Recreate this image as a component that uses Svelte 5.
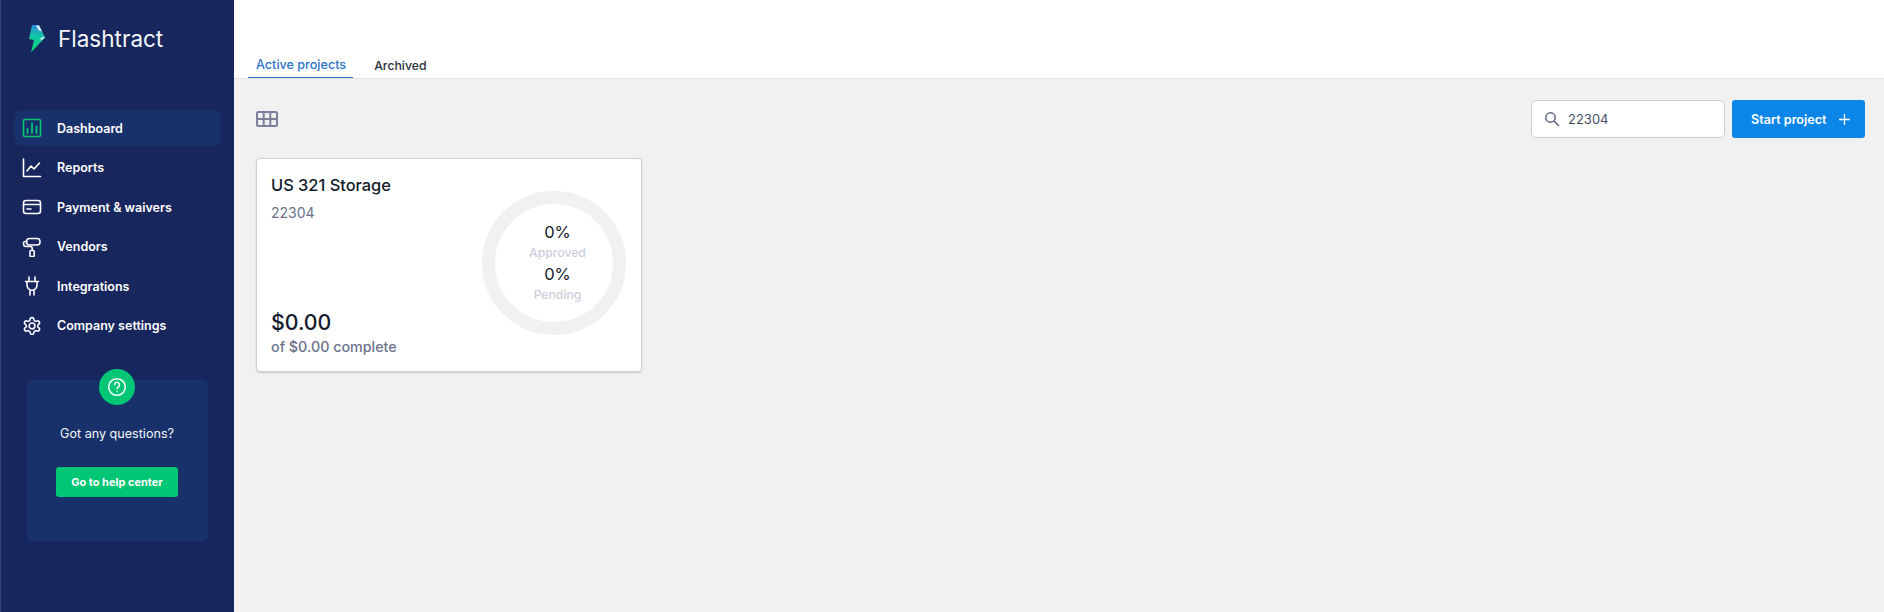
<script>
    const navItems = [
        { label: "Dashboard", icon: "dashboard", active: true },
        { label: "Reports", icon: "reports" },
        { label: "Payment & waivers", icon: "payment" },
        { label: "Vendors", icon: "vendors" },
        { label: "Integrations", icon: "integrations" },
        { label: "Company settings", icon: "settings" },
    ];
</script>

<div class="page">
    <aside class="sidebar">
        <div class="logo">
            <svg width="18" height="30" viewBox="0 0 18 30">
                <defs>
                    <linearGradient id="bolt" x1="0" y1="0" x2="0" y2="1">
                        <stop offset="0" stop-color="#2b86dc" />
                        <stop offset="0.4" stop-color="#14c6a6" />
                        <stop offset="1" stop-color="#00d676" />
                    </linearGradient>
                </defs>
                <path d="M4 2h7l6 12.500-14 15 3-12.500-5-1z" fill="url(#bolt)" />
                <path d="M8 2.500h3l3 6-3-1z" fill="#e6f1fb" />
                <path d="M12.500 15l4-1.500.5 1-4 3z" fill="#cfe6fa" />
            </svg>
            <span class="logo-text">Flashtract</span>
        </div>

        <nav class="nav">
            {#each navItems as item}
                <a class="nav-item" class:active={item.active} href="#top">
                    <svg class="nav-icon" width="20" height="20" viewBox="0 0 20 20" fill="none" stroke="currentColor" stroke-width="1.6" stroke-linecap="round" stroke-linejoin="round">
                        {#if item.icon === "dashboard"}
                            <rect x="1.5" y="1.5" width="17" height="17" rx="1.5" />
                            <path d="M5.500 15v-4M10 15V5.500M14.500 15V8.500" stroke-width="1.800" />
                        {:else if item.icon === "reports"}
                            <path d="M1.500 1v17.500h17" />
                            <path d="M5 13l4-5 3 3 5.500-6" />
                        {:else if item.icon === "payment"}
                            <rect x="1.500" y="3.500" width="17" height="13" rx="2.500" />
                            <path d="M1.500 7.500h17M5 12h4" />
                        {:else if item.icon === "vendors"}
                            <rect x="4.500" y="1.500" width="13.500" height="6.500" rx="3" />
                            <path d="M4.500 4.500H3.200a1.700 1.700 0 0 0-1.700 1.700v.6a2.700 2.700 0 0 0 2.700 2.700h4.300a1.700 1.700 0 0 1 1.700 1.700v2" />
                            <rect x="8" y="13.500" width="4.200" height="6" rx="1" />
                        {:else if item.icon === "integrations"}
                            <path d="M7 1v4M13 1v4M3.500 5.500h13M5 5.500v3.700a5 5 0 0 0 10 0V5.500M8 14.500V19M12 14.500V19" />
                        {:else}
                            <g transform="scale(0.8333)" stroke-width="1.900">
                                <path d="M12.220 2h-.44a2 2 0 0 0-2 2v.18a2 2 0 0 1-1 1.730l-.43.250a2 2 0 0 1-2 0l-.15-.08a2 2 0 0 0-2.730.730l-.22.380a2 2 0 0 0 .730 2.730l.15.100a2 2 0 0 1 1 1.720v.510a2 2 0 0 1-1 1.740l-.15.090a2 2 0 0 0-.730 2.730l.22.380a2 2 0 0 0 2.730.730l.15-.08a2 2 0 0 1 2 0l.43.250a2 2 0 0 1 1 1.730V20a2 2 0 0 0 2 2h.44a2 2 0 0 0 2-2v-.18a2 2 0 0 1 1-1.730l.43-.25a2 2 0 0 1 2 0l.15.08a2 2 0 0 0 2.730-.73l.22-.39a2 2 0 0 0-.73-2.730l-.15-.08a2 2 0 0 1-1-1.740v-.5a2 2 0 0 1 1-1.740l.15-.09a2 2 0 0 0 .73-2.730l-.22-.38a2 2 0 0 0-2.730-.73l-.15.08a2 2 0 0 1-2 0l-.43-.25a2 2 0 0 1-1-1.730V4a2 2 0 0 0-2-2z" />
                                <circle cx="12" cy="12" r="3.500" />
                            </g>
                        {/if}
                    </svg>
                    <span>{item.label}</span>
                </a>
            {/each}
        </nav>

        <div class="help">
            <div class="help-badge">
                <svg width="20" height="20" viewBox="0 0 20 20" fill="none" stroke="#fff" stroke-width="1.500" stroke-linecap="round">
                    <circle cx="10" cy="10" r="8.300" />
                    <path d="M7.500 7.800a2.500 2.500 0 1 1 3.800 2.100c-.9.600-1.300 1-1.300 1.900" />
                    <path d="M10 14.400v.1" />
                </svg>
            </div>
            <p>Got any questions?</p>
            <button class="help-button">Go to help center</button>
        </div>
    </aside>

    <main class="main">
        <header class="tabs">
            <a class="tab selected" href="#top">Active projects</a>
            <a class="tab" href="#top">Archived</a>
        </header>

        <div class="content">
            <div class="toolbar">
                <svg class="grid-icon" width="22" height="16" viewBox="0 0 22 16" fill="none" stroke="#79819c" stroke-width="2">
                    <rect x="1" y="1" width="20" height="14" rx="1.500" />
                    <path d="M1 8h20M7.700 1v14M14.300 1v14" />
                </svg>
                <div class="actions">
                    <div class="search">
                        <svg width="16" height="16" viewBox="0 0 16 16" fill="none" stroke="#5f6680" stroke-width="1.500" stroke-linecap="round">
                            <circle cx="6.500" cy="6.500" r="4.700" />
                            <path d="M10 10l4.500 4.500" />
                        </svg>
                        <span>22304</span>
                    </div>
                    <button class="start">
                        <span>Start project</span>
                        <svg width="13" height="13" viewBox="0 0 13 13" stroke="#fff" stroke-width="1.300">
                            <path d="M6.500 1v11M1 6.500h11" />
                        </svg>
                    </button>
                </div>
            </div>

            <section class="card">
                <div class="card-left">
                    <div>
                        <h2>US 321 Storage</h2>
                        <div class="code">22304</div>
                    </div>
                    <div>
                        <div class="amount">$0.00</div>
                        <div class="complete">of $0.00 complete</div>
                    </div>
                </div>
                <div class="ring">
                    <div class="pct">0%</div>
                    <div class="ring-label">Approved</div>
                    <div class="pct">0%</div>
                    <div class="ring-label">Pending</div>
                </div>
            </section>
        </div>
    </main>
</div>

<style>
    :global(body) {
        margin: 0;
        background: #f1f1f2;
    }
    .page {
        display: flex;
        height: 612px;
        overflow: hidden;
        font-family: Inter, "Liberation Sans", sans-serif;
    }
    .sidebar {
        box-sizing: border-box;
        width: 234px;
        flex-shrink: 0;
        padding: 23px 14px 0 13px;
        background: #17265c;
        border-left: 1px solid #3b4675;
    }
    .logo {
        display: flex;
        align-items: center;
        gap: 12px;
        height: 30px;
        padding-left: 14px;
    }
    .logo-text {
        color: #f4f6fa;
        font-size: 22.5px;
        font-weight: 400;
    }
    .nav {
        display: flex;
        flex-direction: column;
        margin-top: 57px;
    }
    .nav-item {
        display: flex;
        align-items: center;
        gap: 15px;
        height: 36px;
        margin-bottom: 3.5px;
        padding-left: 8px;
        border-radius: 6px;
        color: #fff;
        font-size: 12.5px;
        font-weight: 600;
        text-decoration: none;
    }
    .nav-item.active {
        background: #18316a;
    }
    .nav-item.active .nav-icon {
        color: #06c574;
    }
    .help {
        position: relative;
        box-sizing: border-box;
        height: 162px;
        margin: 33px 12px 0;
        padding-top: 46px;
        border-radius: 6px;
        background: #18316a;
        color: #f4f6fa;
        text-align: center;
    }
    .help p {
        margin: 0;
        font-size: 12.6px;
    }
    .help-badge {
        position: absolute;
        top: -11px;
        left: 73px;
        display: flex;
        align-items: center;
        justify-content: center;
        width: 36px;
        height: 36px;
        border-radius: 50%;
        background: #00c675;
    }
    .help-button {
        width: 122px;
        height: 30px;
        margin-top: 26px;
        border: 0;
        border-radius: 3px;
        background: #00c675;
        color: #fff;
        font-family: inherit;
        font-size: 11px;
        font-weight: 700;
    }
    .main {
        flex: 1;
        min-width: 0;
    }
    .tabs {
        box-sizing: border-box;
        display: flex;
        align-items: flex-end;
        height: 79px;
        padding-left: 14px;
        gap: 14px;
        background: #fff;
        border-bottom: 1px solid #e4e4e6;
    }
    .tab {
        padding: 0 7px 5px;
        color: #2b3040;
        font-size: 12.3px;
        font-weight: 500;
        text-decoration: none;
    }
    .tab.selected {
        padding: 0 7px 5px 8px;
        border-bottom: 1px solid #2b74c9;
        color: #2b74c9;
        font-size: 12.6px;
    }
    .content {
        padding: 21px 19px 0 22px;
    }
    .toolbar {
        display: flex;
        align-items: center;
        justify-content: space-between;
    }
    .actions {
        display: flex;
        gap: 7px;
    }
    .search {
        box-sizing: border-box;
        display: flex;
        align-items: center;
        gap: 8px;
        width: 194px;
        height: 38px;
        padding-left: 12px;
        border: 1px solid #c9ccd8;
        border-radius: 5px;
        background: #fff;
        color: #4a5068;
        font-size: 13px;
    }
    .start {
        display: flex;
        align-items: center;
        gap: 11px;
        width: 133px;
        height: 38px;
        padding: 0 0 0 19px;
        border: 0;
        border-radius: 3px;
        background: #0a86e8;
        color: #fff;
        font-family: inherit;
        font-size: 12.6px;
        font-weight: 600;
    }
    .card {
        box-sizing: border-box;
        display: flex;
        justify-content: space-between;
        width: 386px;
        height: 214px;
        margin-top: 20px;
        padding: 16px 15px 16px 14px;
        border: 1px solid #cfd1da;
        border-radius: 4px;
        background: #fff;
        box-shadow: 0 1px 2px rgba(60, 66, 90, 0.2);
    }
    .card-left {
        display: flex;
        flex-direction: column;
        justify-content: space-between;
    }
    h2 {
        margin: 0;
        color: #141a2c;
        font-size: 16.4px;
        font-weight: 450;
    }
    .code {
        margin-top: 9px;
        color: #6b728c;
        font-size: 14px;
    }
    .amount {
        color: #141a2c;
        font-size: 21.3px;
        font-weight: 450;
    }
    .complete {
        margin-top: 3px;
        color: #6b728c;
        font-size: 14.3px;
        font-weight: 450;
    }
    .ring {
        box-sizing: border-box;
        display: flex;
        flex-direction: column;
        align-items: center;
        justify-content: center;
        align-self: center;
        width: 144px;
        height: 144px;
        margin-bottom: 4px;
        padding: 0 0 0 7px;
        border: 13px solid #f1f1f2;
        border-radius: 50%;
    }
    .pct {
        color: #141a2c;
        font-size: 16.5px;
        line-height: 21px;
    }
    .pct + .ring-label + .pct {
        margin-top: 2.7px;
    }
    .ring-label {
        color: #cdd0da;
        font-size: 12.2px;
        font-weight: 500;
        line-height: 19px;
    }
</style>
